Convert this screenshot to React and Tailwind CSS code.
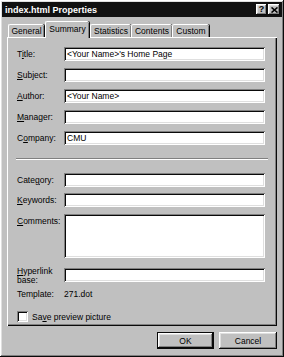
import React from "react";

const sunken =
  "bg-white shadow-[inset_1px_1px_#808080,inset_-1px_-1px_#ffffff,inset_2px_2px_#0a0a0a,inset_-2px_-2px_#dfdfdf]";
const raised =
  "shadow-[inset_-1px_-1px_#0a0a0a,inset_1px_1px_#ffffff,inset_-2px_-2px_#808080,inset_2px_2px_#dfdfdf]";

function U({ children }) {
  return <span className="underline underline-offset-[1px]">{children}</span>;
}

function Row({ label, value, h = "h-[14px]", labelClass = "pt-[2px] leading-[10px]", rowClass = "" }) {
  return (
    <div className={`flex items-start ${rowClass}`}>
      <div className={`w-[47px] shrink-0 ${labelClass}`}>{label}</div>
      <div className={`w-[201px] ${h} ${sunken} pl-[3px] pt-[2px] leading-[10px] whitespace-nowrap overflow-hidden`}>
        {value}
      </div>
    </div>
  );
}

function Tab({ label, w, selected }) {
  if (selected) {
    return (
      <div
        className={`relative z-10 ${w} h-[17px] -mb-[1px] bg-[#c0c0c0] border-l border-t border-white rounded-tl-[2px] rounded-tr-[2px] shadow-[inset_-1px_0_#808080,1px_0_#0a0a0a] flex items-start justify-center pt-[2px] leading-[10px]`}
      >
        {label}
      </div>
    );
  }
  return (
    <div
      className={`${w} h-[13px] bg-[#c0c0c0] border-l border-t border-white rounded-tl-[2px] rounded-tr-[2px] shadow-[inset_-1px_0_#808080,1px_0_#0a0a0a] flex items-start justify-center pt-[1px] leading-[10px]`}
    >
      {label}
    </div>
  );
}

export default function App() {
  return (
    <div
      className={`w-[284px] h-[357px] bg-[#c0c0c0] p-[2px] flex flex-col text-black text-[8.5px] ${raised}`}
      style={{ fontFamily: '"Liberation Sans", Arial, sans-serif' }}
    >
      {/* Title bar */}
      <div className="h-[15px] bg-[#111111] flex items-center justify-between pl-[3px] pr-[2px]">
        <span className="text-white font-bold text-[9px] leading-[10px]">index.html Properties</span>
        <div className="flex gap-[1px]">
          <div className={`w-[11px] h-[11px] bg-[#c0c0c0] ${raised} flex items-center justify-center font-bold text-[9px] leading-[9px]`}>
            ?
          </div>
          <div className={`w-[12px] h-[11px] bg-[#c0c0c0] ${raised} flex items-center justify-center`}>
            <svg width="7" height="6" viewBox="0 0 7 6">
              <path d="M0.5 0.5 L6.5 5.5 M6.5 0.5 L0.5 5.5" stroke="#000" strokeWidth="1.6" />
            </svg>
          </div>
        </div>
      </div>

      {/* Body */}
      <div className="px-[5px] pt-[4px] flex flex-col">
        {/* Tabs */}
        <div className="flex items-end h-[16px] pl-[1px]">
          <Tab label="General" w="w-[36px]" />
          <div className="w-[1px]" />
          <Tab label="Summary" w="w-[44px]" selected />
          <div className="w-[1px]" />
          <Tab label="Statistics" w="w-[41px]" />
          <Tab label="Contents" w="w-[41px]" />
          <Tab label="Custom" w="w-[37px]" />
        </div>

        {/* Panel */}
        <div className="h-[289px] shadow-[inset_1px_1px_#ffffff,inset_-1px_-1px_#0a0a0a,inset_-2px_-2px_#808080] pl-[10px] pt-[10px] flex flex-col">
          <div className="flex flex-col gap-[7px]">
            <Row label={<>T<U>i</U>tle:</>} value="<Your Name>'s Home Page" />
            <Row label={<><U>S</U>ubject:</>} value="" />
            <Row label={<><U>A</U>uthor:</>} value="<Your Name>" />
            <Row label={<><U>M</U>anager:</>} value="" />
            <Row label={<>C<U>o</U>mpany:</>} value="CMU" />
          </div>

          <div className="mt-[13px] ml-[-1px] w-[252px] h-[2px] border-t border-[#808080] border-b border-b-white" />

          <div className="mt-[13px] flex flex-col">
            <Row label={<>Cate<U>g</U>ory:</>} value="" />
            <div className="h-[6px]" />
            <Row label={<><U>K</U>eywords:</>} value="" />
            <div className="h-[7px]" />
            <Row label={<><U>C</U>omments:</>} value="" h="h-[44px]" />
            <div className="h-[10px]" />
            <Row
              label={
                <>
                  <U>H</U>yperlink
                  <br />
                  base:
                </>
              }
              value=""
              labelClass="leading-[9px] -mt-[1px] h-[14px] overflow-visible"
              rowClass="h-[14px]"
            />
            <div className="h-[7px]" />
            <div className="flex items-start leading-[10px]">
              <div className="w-[47px] shrink-0">Template:</div>
              <div>271.dot</div>
            </div>
            <div className="h-[12px]" />
            <div className="flex items-center gap-[4px]">
              <div className={`w-[11px] h-[11px] ${sunken}`} />
              <span className="leading-[10px]">
                Sa<U>v</U>e preview picture
              </span>
            </div>
          </div>
        </div>

        {/* Buttons */}
        <div className="flex justify-end gap-[5px] pt-[6px]">
          <div className="w-[57px] h-[17px] border border-[#0a0a0a]">
            <div className={`w-full h-full ${raised} flex items-center justify-center leading-[10px]`}>OK</div>
          </div>
          <div className={`w-[58px] h-[17px] ${raised} flex items-center justify-center leading-[10px]`}>Cancel</div>
        </div>
      </div>
    </div>
  );
}
